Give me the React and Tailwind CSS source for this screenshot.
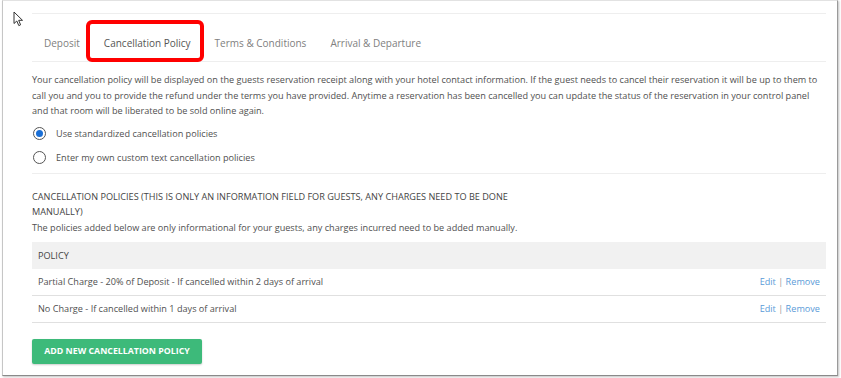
import React from "react";

function Radio({ checked }) {
  return (
    <span className="relative flex h-[13px] w-[13px] items-center justify-center rounded-full border-[1.5px] border-[#555] bg-white">
      {checked && <span className="h-[7px] w-[7px] rounded-full bg-[#1a6fd6]" />}
    </span>
  );
}

function Row({ text }) {
  return (
    <div className="flex h-[27px] items-center justify-between border-b border-[#e0e0e0] pl-[6px] pr-[6px]">
      <span>{text}</span>
      <span className="text-[#5a9bd8]">
        Edit <span className="text-[#999]">|</span> Remove
      </span>
    </div>
  );
}

export default function App() {
  const tabs = ["Deposit", "Cancellation Policy", "Terms & Conditions", "Arrival & Departure"];
  return (
    <div
      className="relative h-[378px] w-[841px] overflow-hidden bg-white text-[9.15px] text-[#505050]"
      style={{ fontFamily: "'Open Sans', sans-serif" }}
    >
      <div className="ml-[2px] h-[376px] w-[836px] border border-t-[#e2e2e2] border-l-[#c6c6c6] border-r-[#9a9a9a] border-b-[#8a8a8a] bg-white pl-[29px] pr-[11px] pt-[12px] shadow-[1px_1px_2px_rgba(0,0,0,0.25)]">
        {/* tabs */}
        <div className="flex h-[49px] border-y border-[#eeeeee] text-[10px]">
          {tabs.map((t, i) => (
            <div key={t} className={`relative px-3 pt-[22px] leading-[14px] ${i === 1 ? "text-[#555]" : "text-[#808080]"}`}>
              {t}
              {i === 1 && (
                <div className="absolute bottom-[-1px] left-[-6px] right-[-1px] top-[6px] rounded-[6px] border-[4px] border-[#ff0000]" />
              )}
            </div>
          ))}
        </div>

        <p className="mt-[10px] pr-[6px] leading-[15.5px]">
          Your cancellation policy will be displayed on the guests reservation receipt along with your hotel contact information. If the guest needs to cancel their reservation it will be up to them to call you and you to provide the refund under the terms you have provided. Anytime a reservation has been cancelled you can update the status of the reservation in your control panel and that room will be liberated to be sold online again.
        </p>

        <div className="mt-[3px]">
          <div className="flex h-[24px] items-center gap-[10px] pl-[1px]">
            <Radio checked />
            <span>Use standardized cancellation policies</span>
          </div>
          <div className="flex h-[24px] items-center gap-[10px] pl-[1px]">
            <Radio />
            <span>Enter my own custom text cancellation policies</span>
          </div>
        </div>

        <div className="mt-[3px] border-t border-[#eeeeee]" />

        <div className="mt-[15px] w-[520px] uppercase leading-[15.5px] text-[#444]">
          Cancellation Policies (this is only an information field for guests, any charges need to be done manually)
        </div>
        <div className="leading-[15.5px]">
          The policies added below are only informational for your guests, any charges incurred need to be added manually.
        </div>

        <div className="mt-[7px]">
          <div className="flex h-[27px] items-center bg-[#f1f1f1] pl-[6px] text-[#444]">POLICY</div>
          <Row text="Partial Charge - 20% of Deposit - If cancelled within 2 days of arrival" />
          <Row text="No Charge - If cancelled within 1 days of arrival" />
        </div>

        <button className="mt-[16px] flex h-[25px] w-[170px] items-center justify-center rounded-[2px] bg-[#3dba7a] text-[8.8px] font-bold uppercase text-white shadow-[0_1px_2px_rgba(0,0,0,0.2)]">
          Add new cancellation policy
        </button>
      </div>

      {/* mouse cursor */}
      <svg className="absolute left-[13px] top-[11px]" width="12" height="16" viewBox="0 0 12 16">
        <path d="M1 1 L1 12.5 L3.8 10 L5.8 14.6 L7.6 13.8 L5.7 9.3 L9.5 9.3 Z" fill="white" stroke="#333" strokeWidth="1" strokeLinejoin="round" />
      </svg>
    </div>
  );
}
